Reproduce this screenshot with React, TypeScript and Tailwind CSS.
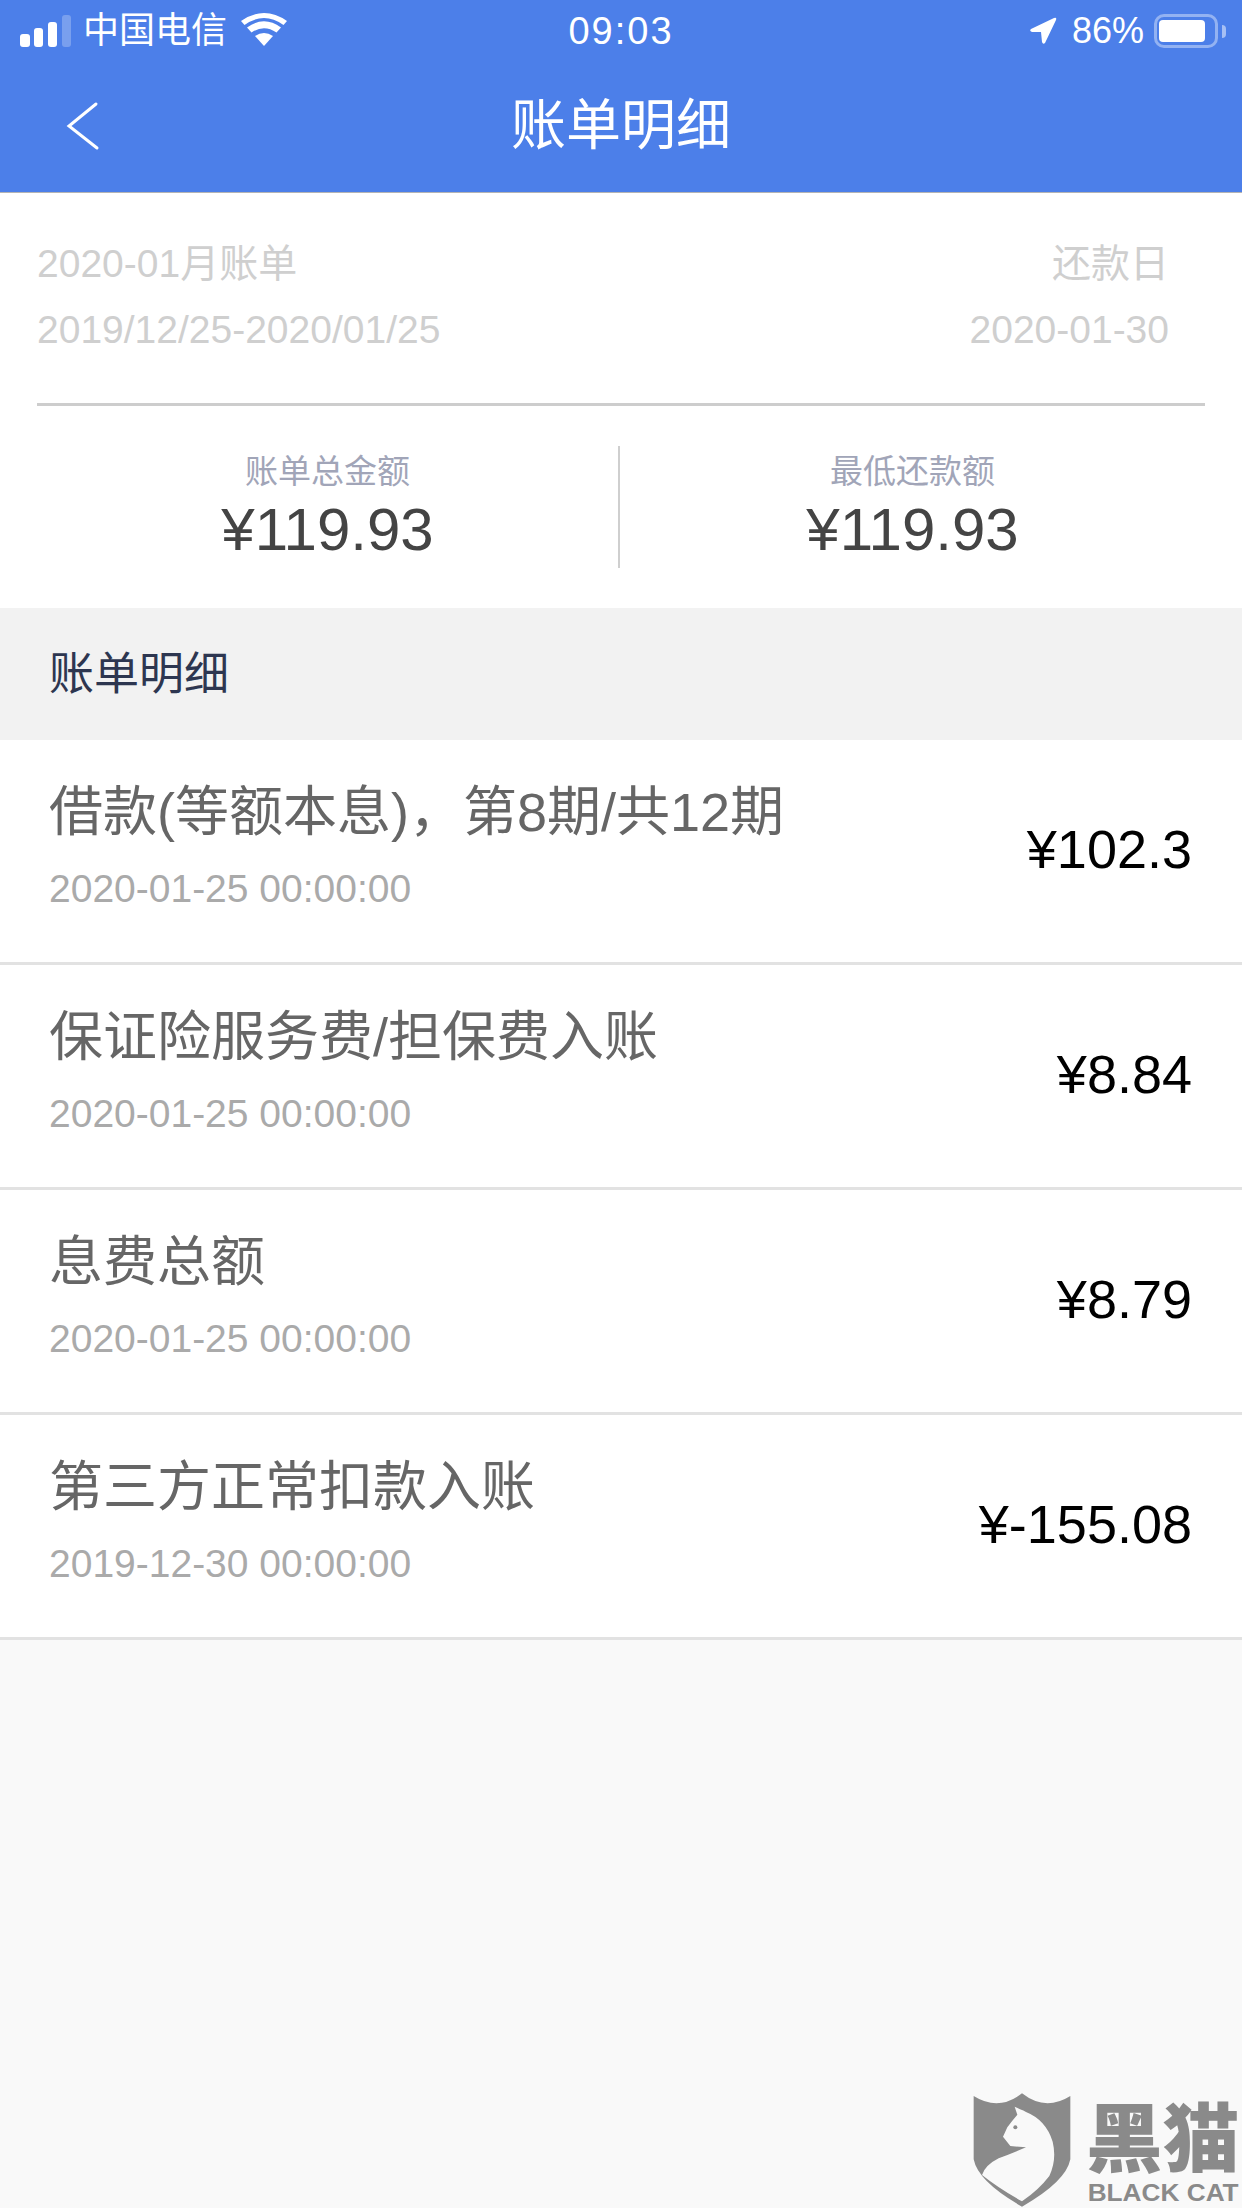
const rows = [
  { t: "借款(等额本息)，第8期/共12期", d: "2020-01-25 00:00:00", a: "¥102.3" },
  { t: "保证险服务费/担保费入账", d: "2020-01-25 00:00:00", a: "¥8.84" },
  { t: "息费总额", d: "2020-01-25 00:00:00", a: "¥8.79" },
  { t: "第三方正常扣款入账", d: "2019-12-30 00:00:00", a: "¥-155.08" },
];

function Logo() {
  return (
    <svg width="300" height="138" viewBox="0 0 900 414" className="absolute right-0 bottom-0">
      <path d="M95 78 Q170 125 240 70 Q310 125 385 78 L385 268 Q372 335 240 410 Q108 335 95 268 Z" fill="#8a8a8a" />
      <path
        d="M218 110 L234 118 Q245 122 252 126 Q312 150 332 215 Q345 270 322 318 Q290 360 240 394 Q170 355 120 315 Q130 285 170 265 Q215 248 252 232 L205 228 L183 200 L196 172 Q212 150 226 134 Z"
        fill="#f9f9f9"
      />
      <circle cx="220" cy="172" r="6" fill="#8a8a8a" />
      <text x="432" y="288" fontSize="225" fontWeight="900" fill="#8a8a8a" fontFamily="'Noto Sans CJK SC', sans-serif" textLength="460" lengthAdjust="spacingAndGlyphs">
        黑猫
      </text>
      <text x="437" y="392" fontSize="70" fontWeight="700" fill="#8a8a8a" fontFamily="'Liberation Sans', sans-serif" textLength="453" lengthAdjust="spacingAndGlyphs">
        BLACK CAT
      </text>
    </svg>
  );
}

export default function App() {
  return (
    <div className="relative flex h-[2208px] w-[1242px] flex-col overflow-hidden bg-[#f9f9f9] [font-family:'Liberation_Sans','Noto_Sans_CJK_SC',sans-serif]">
      <header className="relative h-[193px] shrink-0 border-b border-[#b4b4b4] bg-[#4c7fe9] text-white">
        <div className="flex h-[62px] items-center justify-between pl-[20px] pr-[16px]">
          <div className="flex items-center">
            <svg width="51" height="32" viewBox="0 0 51 32">
              <rect x="0" y="19" width="10" height="13" rx="3" fill="#fff" />
              <rect x="14" y="13" width="9" height="19" rx="3" fill="#fff" />
              <rect x="28" y="7" width="9" height="25" rx="3" fill="#fff" />
              <rect x="42" y="0" width="9" height="32" rx="3" fill="#fff" fillOpacity="0.25" />
            </svg>
            <span className="ml-[12px] text-[36px] leading-[40px]">中国电信</span>
            <svg width="46" height="33" viewBox="0 0 46 33" className="ml-[14px] -translate-y-[2px]">
              <path d="M23 33 L14 23 Q23 17 32 23 Z" fill="#fff" />
              <path d="M10.5 19.5 L6 14.5 Q23 2 40 14.5 L35.5 19.5 Q23 11 10.5 19.5 Z" fill="#fff" />
              <path d="M3.5 12 L0 8 Q23 -8 46 8 L42.5 12 Q23 -2 3.5 12 Z" fill="#fff" />
            </svg>
          </div>
          <div className="flex items-center">
            <svg width="27" height="28" viewBox="0 0 27 28">
              <path d="M1 12 L24 1 Q27 0 26 3 L15 26 Q13 28 12 25 L11 15 L2 15 Q-1 14 1 12 Z" fill="#fff" />
            </svg>
            <span className="ml-[15px] text-[36px] leading-[40px]">86%</span>
            <div className="ml-[10px] h-[34px] w-[64px] rounded-[10px] border-[3px] border-white/40 px-[2px] py-[3px]">
              <div className="h-full w-[46px] rounded-[4px] bg-white" />
            </div>
            <div className="ml-[4px] h-[13px] w-[4px] rounded-r-[4px] bg-white/50" />
          </div>
        </div>
        <span className="absolute left-0 right-0 top-[11px] text-center text-[38px] leading-[40px] tracking-[2px]">09:03</span>
        <div className="relative flex h-[130px] items-start justify-center pt-[27px]">
          <svg width="36" height="50" viewBox="0 0 36 50" className="absolute left-[65px] top-[39px]">
            <path d="M31 3 L4 25 L32 47" fill="none" stroke="#fff" strokeWidth="3" strokeLinecap="round" />
          </svg>
          <h1 className="text-[55px] leading-[72px] font-normal">账单明细</h1>
        </div>
      </header>

      <section className="h-[415px] shrink-0 bg-white px-[37px]">
        <div className="flex h-[213px] justify-between border-b-[3px] border-[#cdcdcd] pt-[38px] pr-[36px] text-[39px] leading-[66px] text-[#cfcfcf]">
          <div>
            <div>2020-01月账单</div>
            <div>2019/12/25-2020/01/25</div>
          </div>
          <div className="text-right">
            <div>还款日</div>
            <div>2020-01-30</div>
          </div>
        </div>
        <div className="flex pt-[40px]">
          <div className="flex h-[122px] w-[583px] flex-col items-center border-r-[2px] border-[#cfcfcf] pt-[6px]">
            <span className="text-[33px] leading-[40px] text-[#a1a5b8]">账单总金额</span>
            <span className="text-[60px] leading-[76px] text-[#444444]">¥119.93</span>
          </div>
          <div className="flex h-[122px] flex-1 flex-col items-center pt-[6px]">
            <span className="text-[33px] leading-[40px] text-[#a1a5b8]">最低还款额</span>
            <span className="text-[60px] leading-[76px] text-[#444444]">¥119.93</span>
          </div>
        </div>
      </section>

      <div className="flex h-[132px] shrink-0 items-center bg-[#f2f2f2] pl-[49px] pt-[2px] text-[45px] text-[#2d3650]">账单明细</div>

      {rows.map((r) => (
        <div key={r.t} className="flex h-[225px] shrink-0 items-center justify-between border-b-[3px] border-[#e2e2e2] bg-white pl-[49px] pr-[50px]">
          <div className="flex flex-col self-start pt-[36px]">
            <span className="text-[54px] leading-[72px] text-[#666666]">{r.t}</span>
            <span className="mt-[18px] text-[39px] leading-[46px] text-[#aaaaaa]">{r.d}</span>
          </div>
          <span className="mb-[4px] text-[54px] leading-[64px] text-black">{r.a}</span>
        </div>
      ))}
      <Logo />
    </div>
  );
}
